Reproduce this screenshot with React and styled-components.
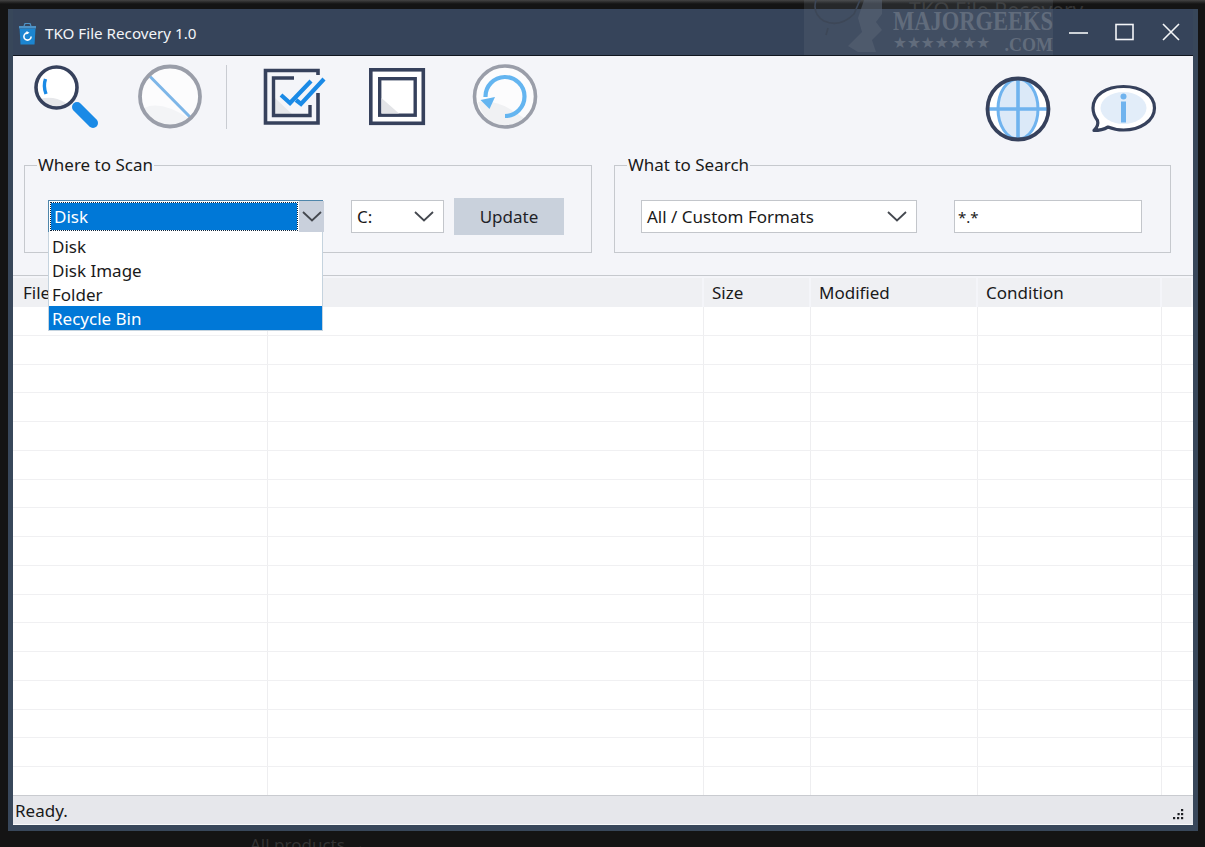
import React from "react";
import styled, { createGlobalStyle } from "styled-components";

const GlobalStyle = createGlobalStyle`
    html, body {
        margin: 0;
        padding: 0;
        background: #141414;
        overflow: hidden;
    }
    * {
        box-sizing: border-box;
    }
`;

const FONT = `"Noto Sans", "Open Sans", sans-serif`;

const Desktop = styled.div`
    position: relative;
    width: 1205px;
    height: 847px;
    padding: 9px 7px 16px 8px;
    background: linear-gradient(#444 0, #2a2a2a 2px, #141414 4px);
    font-family: ${FONT};
    color: #1a1a1a;
    overflow: hidden;
`;

// page text that shows behind the app window
const BehindText = styled.div`
    position: absolute;
    left: ${(p) => p.$left}px;
    top: ${(p) => p.$top}px;
    color: #333;
    font-size: ${(p) => p.$size}px;
    line-height: 1;
    white-space: nowrap;
`;

const Watermark = styled.div`
    position: absolute;
    top: 0;
    left: 804px;
    display: flex;
    width: 249px;
    height: 55px;
    background: rgba(112, 118, 130, 0.2);
    color: #616c7c;
    font-family: "Liberation Serif", serif;
    font-weight: bold;
    line-height: 1;
    z-index: 2;
`;

const WatermarkText = styled.div`
    flex: 1;
    padding: 8px 5px 0 5px;
    text-align: right;
`;

const WatermarkName = styled.div`
    font-size: 22.5px;
    height: 25px;
    white-space: nowrap;
    transform: scaleY(1.2);
    transform-origin: top;
`;

const WatermarkSub = styled.div`
    display: flex;
    align-items: center;
    justify-content: space-between;
    height: 16px;
    margin-top: 3px;
`;

const WatermarkStars = styled.span`
    font-size: 15.5px;
    font-family: "DejaVu Sans", sans-serif;
`;

const WatermarkCom = styled.span`
    font-size: 18px;
    transform: scaleY(1.1);
`;

const Window = styled.div`
    position: relative;
    display: flex;
    flex-direction: column;
    height: 100%;
    padding: 0 5px 6px 5px;
    background: #38475a;
`;

const TitleBar = styled.div`
    display: flex;
    align-items: center;
    flex: 0 0 47px;
    padding: 2px 0 0 5px;
    border-bottom: 1px solid #10161f;
    background: #36445a;
    color: #f2f4f7;
    font-size: 15.2px;
`;

const TitleText = styled.span`
    margin-left: 7px;
`;

const WindowControls = styled.div`
    display: flex;
    align-items: center;
    gap: 26px;
    margin-left: auto;
    padding-right: 12px;
`;

const Client = styled.div`
    display: flex;
    flex-direction: column;
    flex: 1;
    min-height: 0;
    position: relative;
    background: #f4f5f9;
`;

const Toolbar = styled.div`
    display: flex;
    align-items: flex-start;
    flex: 0 0 99px;
    padding: 8px 36px 0 20px;
`;

const ToolButton = styled.button`
    display: block;
    flex: none;
    width: 66px;
    height: 66px;
    margin: ${(p) => p.$top || 0}px 0 0 ${(p) => p.$gap || 0}px;
    padding: 0;
    border: none;
    background: none;
`;

const ToolSeparator = styled.div`
    flex: none;
    width: 1px;
    height: 64px;
    margin: 1px 33px 0 23px;
    background: #c9ccd2;
`;

const ToolSpacer = styled.div`
    flex: 1;
`;

const Groups = styled.div`
    display: flex;
    gap: 22px;
    padding: 0 22px 0 11px;
`;

const Group = styled.fieldset`
    flex: 0 0 ${(p) => p.$width}px;
    height: 98px;
    margin: 0;
    padding: 0;
    border: 1px solid #c6c9ce;
    border-radius: 0;
    display: flex;
    align-items: flex-start;
    min-width: 0;
`;

const GroupLegend = styled.legend`
    margin-left: 12px;
    padding: 0 1px;
    font-size: 17px;
    line-height: 20px;
    color: #1a1a1a;
`;

const GroupBody = styled.div`
    display: flex;
    align-items: center;
    height: 37px;
    margin-top: 23px;
    padding-left: ${(p) => p.$left}px;
`;

const Combo = styled.div`
    position: relative;
    display: flex;
    align-items: center;
    flex: none;
    width: ${(p) => p.$width}px;
    height: 33px;
    margin-left: ${(p) => p.$gap || 0}px;
    padding: 0 0 0 5px;
    border: 1px solid ${(p) => (p.$open ? "#4f86ab" : "#c3c6cb")};
    background: #fff;
    font-size: 17px;
    white-space: nowrap;
`;

const ComboValue = styled.span`
    flex: 1;
`;

const FocusedValue = styled.span`
    flex: none;
    display: flex;
    align-items: center;
    width: 246px;
    height: 27px;
    margin: 0 2px 0 -3px;
    padding-left: 3px;
    outline: 1px dotted #10253a;
    outline-offset: 0;
    background: #0078d7;
    color: #fff;
`;

const ArrowBox = styled.span`
    display: flex;
    align-items: center;
    justify-content: center;
    flex: none;
    width: ${(p) => (p.$active ? "25px" : "auto")};
    height: 100%;
    padding-right: ${(p) => (p.$active ? 0 : 9)}px;
    background: ${(p) => (p.$active ? "#c9d0dc" : "transparent")};
`;

const ComboList = styled.ul`
    position: absolute;
    top: 31px;
    left: -1px;
    width: 275px;
    margin: 0;
    padding: 2px 0 0;
    list-style: none;
    background: #fff;
    border: 1px solid #c5d3de;
    border-top: none;
    z-index: 4;
`;

const ComboItem = styled.li`
    display: flex;
    align-items: center;
    height: 24px;
    padding-left: 3px;
    background: ${(p) => (p.$selected ? "#0078d7" : "transparent")};
    color: ${(p) => (p.$selected ? "#fff" : "#1a1a1a")};
    font-size: 17px;
`;

const UpdateButton = styled.button`
    flex: none;
    width: 110px;
    height: 37px;
    margin-left: 10px;
    border: none;
    background: #c9d1dc;
    color: #1f2328;
    font-family: ${FONT};
    font-size: 17px;
`;

const PatternInput = styled.input`
    flex: none;
    width: 188px;
    height: 33px;
    margin-left: 37px;
    padding: 0 0 0 3px;
    border: 1px solid #c3c6cb;
    background: #fff;
    color: #1a1a1a;
    font-family: ${FONT};
    font-size: 15px;
`;

const FileTable = styled.div`
    display: flex;
    flex-direction: column;
    flex: 1;
    min-height: 0;
    margin-top: 22px;
    border-top: 1px solid #c6c9ce;
    background: #fff;
`;

const COLUMNS = "255px 436px 107px 167px 184px 1fr";

const HeaderRow = styled.div`
    display: grid;
    grid-template-columns: ${COLUMNS};
    flex: 0 0 31px;
    padding-top: 2px;
    background: #f4f5f9;
`;

const HeaderCell = styled.div`
    display: flex;
    align-items: center;
    margin-right: 2px;
    padding-left: ${(p) => p.$left ?? 8}px;
    background: #eff0f3;
    font-size: 17px;
    overflow: hidden;
`;

const TableBody = styled.div`
    display: flex;
    flex-direction: column;
    flex: 1;
    min-height: 0;
`;

const DataRow = styled.div`
    display: grid;
    grid-template-columns: ${COLUMNS};
    flex: 1;
    border-bottom: 1px solid #f0f0f2;
    &:last-child {
        border-bottom: none;
    }
`;

const DataCell = styled.div`
    border-right: 1px solid #eeeef0;
    &:last-child {
        border-right: none;
    }
`;

const StatusBar = styled.div`
    display: flex;
    align-items: center;
    justify-content: space-between;
    flex: 0 0 30px;
    padding: 0 9px 0 2px;
    border-top: 1px solid #c9cbd0;
    border-bottom: 1px solid #fafafa;
    background: #e6e7eb;
    font-size: 17px;
`;

const Grip = styled.span`
    align-self: flex-end;
    display: flex;
    margin-bottom: 4px;
`;

const WatermarkLogo = () => (
    <svg width="84" height="55" viewBox="0 0 84 55" style={{ flex: "none" }}>
        <path d="M12 0 Q8 14 20 21 Q36 28 50 14 L56 0" fill="none" stroke="#3d4757" strokeWidth="1.6" />
        <path d="M24 28 Q23 32 22 35" fill="none" stroke="#3d4757" strokeWidth="1.6" />
        <path d="M60 0 H78 V14 L72 22 L78 30 L68 40 L72 52 H54 L44 46 L58 32 L54 18Z" fill="#5a6474" opacity="0.55" />
    </svg>
);

const MagnifierIcon = () => (
    <svg width="66" height="66" viewBox="0 0 66 66">
        <circle cx="23.5" cy="23.5" r="20" fill="#fff" />
        <path d="M7 35 Q20 31 33 39 Q28 43 23 43.5 Q13 43 7 35Z" fill="#e6e7ea" />
        <path d="M12.5 15 Q10 22 13 30" fill="none" stroke="#1a8ae6" strokeWidth="3.4" />
        <circle cx="23.5" cy="23.5" r="20.5" fill="none" stroke="#36415c" strokeWidth="3.6" />
        <path d="M44 43 L60 59" stroke="#1a8ae6" strokeWidth="10" strokeLinecap="round" />
    </svg>
);

const StopIcon = () => (
    <svg width="66" height="66" viewBox="0 0 66 66">
        <circle cx="33" cy="32.5" r="30" fill="#fcfcfd" />
        <path d="M7 44 Q24 36 51 54 Q42 61 33 61 Q15 60 7 44Z" fill="#f3f4f6" />
        <path d="M13 12.5 L53 53" stroke="#7db6e8" strokeWidth="3" />
        <circle cx="33" cy="32.5" r="30" fill="none" stroke="#9a9ea9" strokeWidth="3.8" />
    </svg>
);

const CheckAllIcon = () => (
    <svg width="66" height="66" viewBox="0 0 66 66">
        <path d="M15 34 L15 50 L32 50Z" fill="#e6e7ea" />
        <path d="M58 11 V6.5 H5.5 V59 H58 V29" fill="none" stroke="#36415c" strokeWidth="3.6" />
        <path d="M34 14 H13.5 V51.5 H50 V41" fill="none" stroke="#36415c" strokeWidth="3.4" />
        <path d="M21 31 L30 39 L51 17" fill="none" stroke="#1a8ae6" strokeWidth="4.2" />
        <path d="M36 36 L41 40 L64 15" fill="none" stroke="#1a8ae6" strokeWidth="4.2" />
    </svg>
);

const CheckNoneIcon = () => (
    <svg width="66" height="66" viewBox="0 0 66 66">
        <rect x="6.8" y="5.8" width="52.5" height="53.5" fill="#fff" stroke="#36415c" strokeWidth="3.6" />
        <rect x="15.7" y="14.7" width="35.5" height="36.5" fill="#fff" stroke="#36415c" strokeWidth="3.4" />
        <path d="M17.5 34 L17.5 49.5 L35 49.5Z" fill="#e3e4e7" />
    </svg>
);

const RestoreIcon = () => (
    <svg width="66" height="66" viewBox="0 0 66 66">
        <circle cx="33" cy="32.5" r="30.5" fill="#fcfcfd" />
        <path d="M6 38 Q25 34 52 54 Q42 62 33 62 Q12 60 6 38Z" fill="#f0f1f3" />
        <path d="M13.5 33 A19.5 19.5 0 1 1 33 52" fill="none" stroke="#64b5f0" strokeWidth="4.2" />
        <path d="M8.5 36 L23 33 L17.5 45Z" fill="#64b5f0" />
        <circle cx="33" cy="32.5" r="30.5" fill="none" stroke="#9a9ea9" strokeWidth="3.6" />
    </svg>
);

const GlobeIcon = () => (
    <svg width="66" height="66" viewBox="0 0 66 66">
        <circle cx="33" cy="33" r="30" fill="#fff" />
        <ellipse cx="33" cy="33" rx="20" ry="30" fill="#dbe9f8" stroke="#6fb3ee" strokeWidth="3" />
        <path d="M33 3 V63 M3 33 H63" stroke="#6fb3ee" strokeWidth="3.6" />
        <circle cx="33" cy="33" r="30.5" fill="none" stroke="#36415c" strokeWidth="3.8" />
    </svg>
);

const InfoIcon = () => (
    <svg width="66" height="66" viewBox="0 0 66 66">
        <path
            d="M3 54.5 Q8 49.5 6.5 44.5 Q2 38.5 2 32 C2 19 15 10.5 32.5 10.5 C50 10.5 63.5 19 63.5 32 C63.5 45 49 54 32.5 54 Q24 54 17 51 Q11 54.5 3 54.5Z"
            fill="#fff"
            stroke="#36415c"
            strokeWidth="3.2"
            strokeLinejoin="round"
        />
        <ellipse cx="32.5" cy="32" rx="23" ry="16" fill="#e2edf9" />
        <circle cx="32.5" cy="20.5" r="3" fill="#6fb3ee" />
        <rect x="30" y="25.5" width="5" height="21" fill="#6fb3ee" />
    </svg>
);

const AppIcon = () => (
    <svg width="20" height="24" viewBox="0 0 20 24">
        <path d="M1 5 H18 V7.5 H1Z" fill="#4f93c6" />
        <path d="M6 5 L7 2.5 H12 L13 5" fill="none" stroke="#4f93c6" strokeWidth="1.2" />
        <path d="M1.5 7.5 H17.5 L16.5 23.5 H2.5Z" fill="#1c85d0" />
        <circle cx="9.5" cy="15.5" r="3.6" fill="none" stroke="#fff" strokeWidth="1.6" strokeDasharray="17 6" />
        <path d="M8.5 10 L11.5 11.7 L8.5 13.5Z" fill="#fff" />
    </svg>
);

const Chevron = ({ color = "#44484f" }) => (
    <svg width="20" height="11" viewBox="0 0 20 11">
        <path d="M1 1 L10 9.5 L19 1" fill="none" stroke={color} strokeWidth="1.8" />
    </svg>
);

const GripIcon = () => (
    <svg width="12" height="11" viewBox="0 0 12 11" fill="#1e2024">
        <rect x="9" y="0" width="2.2" height="2.2" />
        <rect x="5.5" y="4" width="2.2" height="2.2" />
        <rect x="9" y="4" width="2.2" height="2.2" />
        <rect x="1" y="8" width="2.2" height="2.2" />
        <rect x="5" y="8" width="2.2" height="2.2" />
        <rect x="9" y="8" width="2.2" height="2.2" />
    </svg>
);

const scanModes = ["Disk", "Disk Image", "Folder", "Recycle Bin"];
const rows = Array.from({ length: 17 }, (_, i) => i);
const columns = [0, 1, 2, 3, 4, 5];

const App = () => {
    return (
        <>
            <GlobalStyle />
            <Desktop>
                <BehindText $left={909} $top={0} $size={21}>TKO File Recovery</BehindText>
                <BehindText $left={250} $top={836} $size={17}>All products →</BehindText>
                <Window>
                    <TitleBar>
                        <AppIcon />
                        <TitleText>TKO File Recovery 1.0</TitleText>
                        <WindowControls>
                            <svg width="20" height="20" viewBox="0 0 20 20">
                                <path d="M0 10 H19" stroke="#f4f6f8" strokeWidth="1.6" />
                            </svg>
                            <svg width="20" height="20" viewBox="0 0 20 20">
                                <rect x="1" y="1.5" width="17" height="15" fill="none" stroke="#f4f6f8" strokeWidth="1.6" />
                            </svg>
                            <svg width="20" height="20" viewBox="0 0 20 20">
                                <path d="M2 1 L18 17 M18 1 L2 17" stroke="#f4f6f8" strokeWidth="1.6" />
                            </svg>
                        </WindowControls>
                    </TitleBar>
                    <Client>
                        <Toolbar>
                            <ToolButton><MagnifierIcon /></ToolButton>
                            <ToolButton $gap={38}><StopIcon /></ToolButton>
                            <ToolSeparator />
                            <ToolButton><CheckAllIcon /></ToolButton>
                            <ToolButton $gap={38}><CheckNoneIcon /></ToolButton>
                            <ToolButton $gap={42}><RestoreIcon /></ToolButton>
                            <ToolSpacer />
                            <ToolButton $top={12}><GlobeIcon /></ToolButton>
                            <ToolButton $top={12} $gap={40}><InfoIcon /></ToolButton>
                        </Toolbar>
                        <Groups>
                            <Group $width={568}>
                                <GroupLegend>Where to Scan</GroupLegend>
                                <GroupBody $left={23}>
                                    <Combo $width={275} $open>
                                        <FocusedValue>Disk</FocusedValue>
                                        <ArrowBox $active><Chevron /></ArrowBox>
                                        <ComboList>
                                            {scanModes.map((mode) => (
                                                <ComboItem key={mode} $selected={mode === "Recycle Bin"}>{mode}</ComboItem>
                                            ))}
                                        </ComboList>
                                    </Combo>
                                    <Combo $width={93} $gap={28}>
                                        <ComboValue>C:</ComboValue>
                                        <ArrowBox><Chevron /></ArrowBox>
                                    </Combo>
                                    <UpdateButton>Update</UpdateButton>
                                </GroupBody>
                            </Group>
                            <Group $width={557}>
                                <GroupLegend>What to Search</GroupLegend>
                                <GroupBody $left={26}>
                                    <Combo $width={276}>
                                        <ComboValue>All / Custom Formats</ComboValue>
                                        <ArrowBox><Chevron /></ArrowBox>
                                    </Combo>
                                    <PatternInput defaultValue="*.*" />
                                </GroupBody>
                            </Group>
                        </Groups>
                        <FileTable>
                            <HeaderRow>
                                <HeaderCell $left={10}>File</HeaderCell>
                                <HeaderCell />
                                <HeaderCell>Size</HeaderCell>
                                <HeaderCell>Modified</HeaderCell>
                                <HeaderCell>Condition</HeaderCell>
                                <HeaderCell />
                            </HeaderRow>
                            <TableBody>
                                {rows.map((row) => (
                                    <DataRow key={row}>
                                        {columns.map((col) => <DataCell key={col} />)}
                                    </DataRow>
                                ))}
                            </TableBody>
                        </FileTable>
                        <StatusBar>
                            Ready.
                            <Grip><GripIcon /></Grip>
                        </StatusBar>
                    </Client>
                </Window>
                <Watermark>
                    <WatermarkLogo />
                    <WatermarkText>
                        <WatermarkName>MAJORGEEKS</WatermarkName>
                        <WatermarkSub>
                            <WatermarkStars>★★★★★★★</WatermarkStars>
                            <WatermarkCom>.COM</WatermarkCom>
                        </WatermarkSub>
                    </WatermarkText>
                </Watermark>
            </Desktop>
        </>
    );
};

export default App;
